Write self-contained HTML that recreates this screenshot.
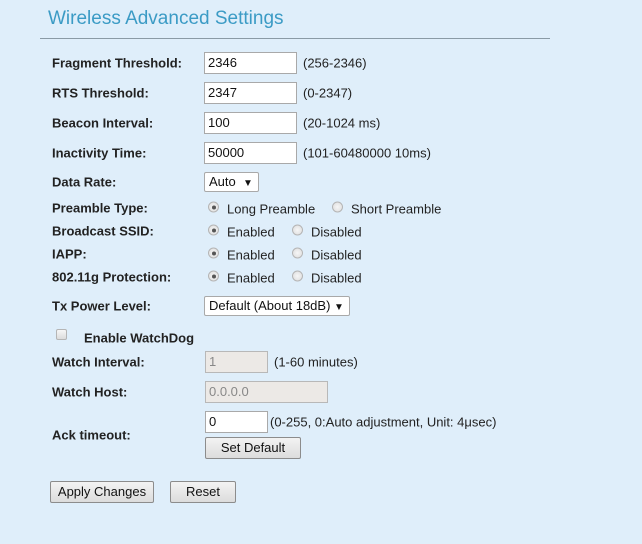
<!DOCTYPE html>
<html><head><style>
body{margin:0;width:642px;height:544px;background:#dfeefa;font-family:"Liberation Sans",sans-serif;position:relative;overflow:hidden}
.a{position:absolute;white-space:nowrap}
.t{left:48px;top:8px;font-size:19px;color:#3b9bc5}
.hr{left:40px;top:38px;width:510px;height:1px;background:#8a9aa5}
.l{left:52px;font-size:13px;font-weight:bold;color:#222;transform:translateY(-50%)}
.n{font-size:13px;color:#222;transform:translateY(-50%)}
.in{background:#fff;border:1px solid #a9a9a9;box-sizing:border-box;font-size:13px;padding:0 3px;line-height:20px;height:22px;color:#111}
.dis{background:#ece9e6;color:#888;border-color:#b8b8b8}
.sel{background:#fff;border:1px solid #a9a9a9;box-sizing:border-box;font-size:13px;padding:0 4px;line-height:18px;height:20px;color:#111;border-radius:2px}
.r{width:11px;height:11px;border-radius:50%;border:1px solid #b5b5b5;background:radial-gradient(circle,#f6f6f6,#dcdcdc);box-sizing:border-box;transform:translateY(-50%)}
.r.on::after{content:"";position:absolute;left:2.5px;top:2.5px;width:4px;height:4px;border-radius:50%;background:#555}
.b{background:linear-gradient(#f3f3f3,#dcdcdc);border:1px solid #8c8c8c;box-sizing:border-box;font-size:13px;text-align:center;line-height:20px;height:22px;color:#111;border-radius:2px}
</style></head><body>
<div class="a t">Wireless Advanced Settings</div>
<div class="a hr"></div>

<div class="a l" style="top:63px">Fragment Threshold:</div>
<div class="a in" style="left:204px;top:52px;width:93px">2346</div>
<div class="a n" style="left:303px;top:63px">(256-2346)</div>

<div class="a l" style="top:93px">RTS Threshold:</div>
<div class="a in" style="left:204px;top:82px;width:93px">2347</div>
<div class="a n" style="left:303px;top:93px">(0-2347)</div>

<div class="a l" style="top:123px">Beacon Interval:</div>
<div class="a in" style="left:204px;top:112px;width:93px">100</div>
<div class="a n" style="left:303px;top:123px">(20-1024 ms)</div>

<div class="a l" style="top:153px">Inactivity Time:</div>
<div class="a in" style="left:204px;top:142px;width:93px">50000</div>
<div class="a n" style="left:303px;top:153px">(101-60480000 10ms)</div>

<div class="a l" style="top:182px">Data Rate:</div>
<div class="a sel" style="left:204px;top:172px;width:55px">Auto &nbsp;<span style="font-size:10px">▼</span></div>

<div class="a l" style="top:208px">Preamble Type:</div>
<div class="a r on" style="left:208px;top:207px"></div><div class="a n" style="left:227px;top:209px">Long Preamble</div>
<div class="a r" style="left:332px;top:207px"></div><div class="a n" style="left:351px;top:209px">Short Preamble</div>

<div class="a l" style="top:231px">Broadcast SSID:</div>
<div class="a r on" style="left:208px;top:230px"></div><div class="a n" style="left:227px;top:232px">Enabled</div>
<div class="a r" style="left:292px;top:230px"></div><div class="a n" style="left:311px;top:232px">Disabled</div>

<div class="a l" style="top:254px">IAPP:</div>
<div class="a r on" style="left:208px;top:253px"></div><div class="a n" style="left:227px;top:255px">Enabled</div>
<div class="a r" style="left:292px;top:253px"></div><div class="a n" style="left:311px;top:255px">Disabled</div>

<div class="a l" style="top:277px">802.11g Protection:</div>
<div class="a r on" style="left:208px;top:276px"></div><div class="a n" style="left:227px;top:278px">Enabled</div>
<div class="a r" style="left:292px;top:276px"></div><div class="a n" style="left:311px;top:278px">Disabled</div>

<div class="a l" style="top:306px">Tx Power Level:</div>
<div class="a sel" style="left:204px;top:296px;width:146px">Default (About 18dB) <span style="font-size:10px">▼</span></div>

<div class="a" style="left:56px;top:329px;width:11px;height:11px;border:1px solid #b5b5b5;background:linear-gradient(#f6f6f6,#dcdcdc);box-sizing:border-box;border-radius:2px"></div>
<div class="a l" style="left:84px;top:338px">Enable WatchDog</div>

<div class="a l" style="top:362px">Watch Interval:</div>
<div class="a in dis" style="left:205px;top:351px;width:63px">1</div>
<div class="a n" style="left:274px;top:362px">(1-60 minutes)</div>

<div class="a l" style="top:392px">Watch Host:</div>
<div class="a in dis" style="left:205px;top:381px;width:123px">0.0.0.0</div>

<div class="a l" style="top:435px">Ack timeout:</div>
<div class="a in" style="left:205px;top:411px;width:63px">0</div>
<div class="a n" style="left:270px;top:422px">(0-255, 0:Auto adjustment, Unit: 4μsec)</div>
<div class="a b" style="left:205px;top:437px;width:96px">Set Default</div>

<div class="a b" style="left:50px;top:481px;width:104px">Apply Changes</div>
<div class="a b" style="left:170px;top:481px;width:66px">Reset</div>
</body></html>
